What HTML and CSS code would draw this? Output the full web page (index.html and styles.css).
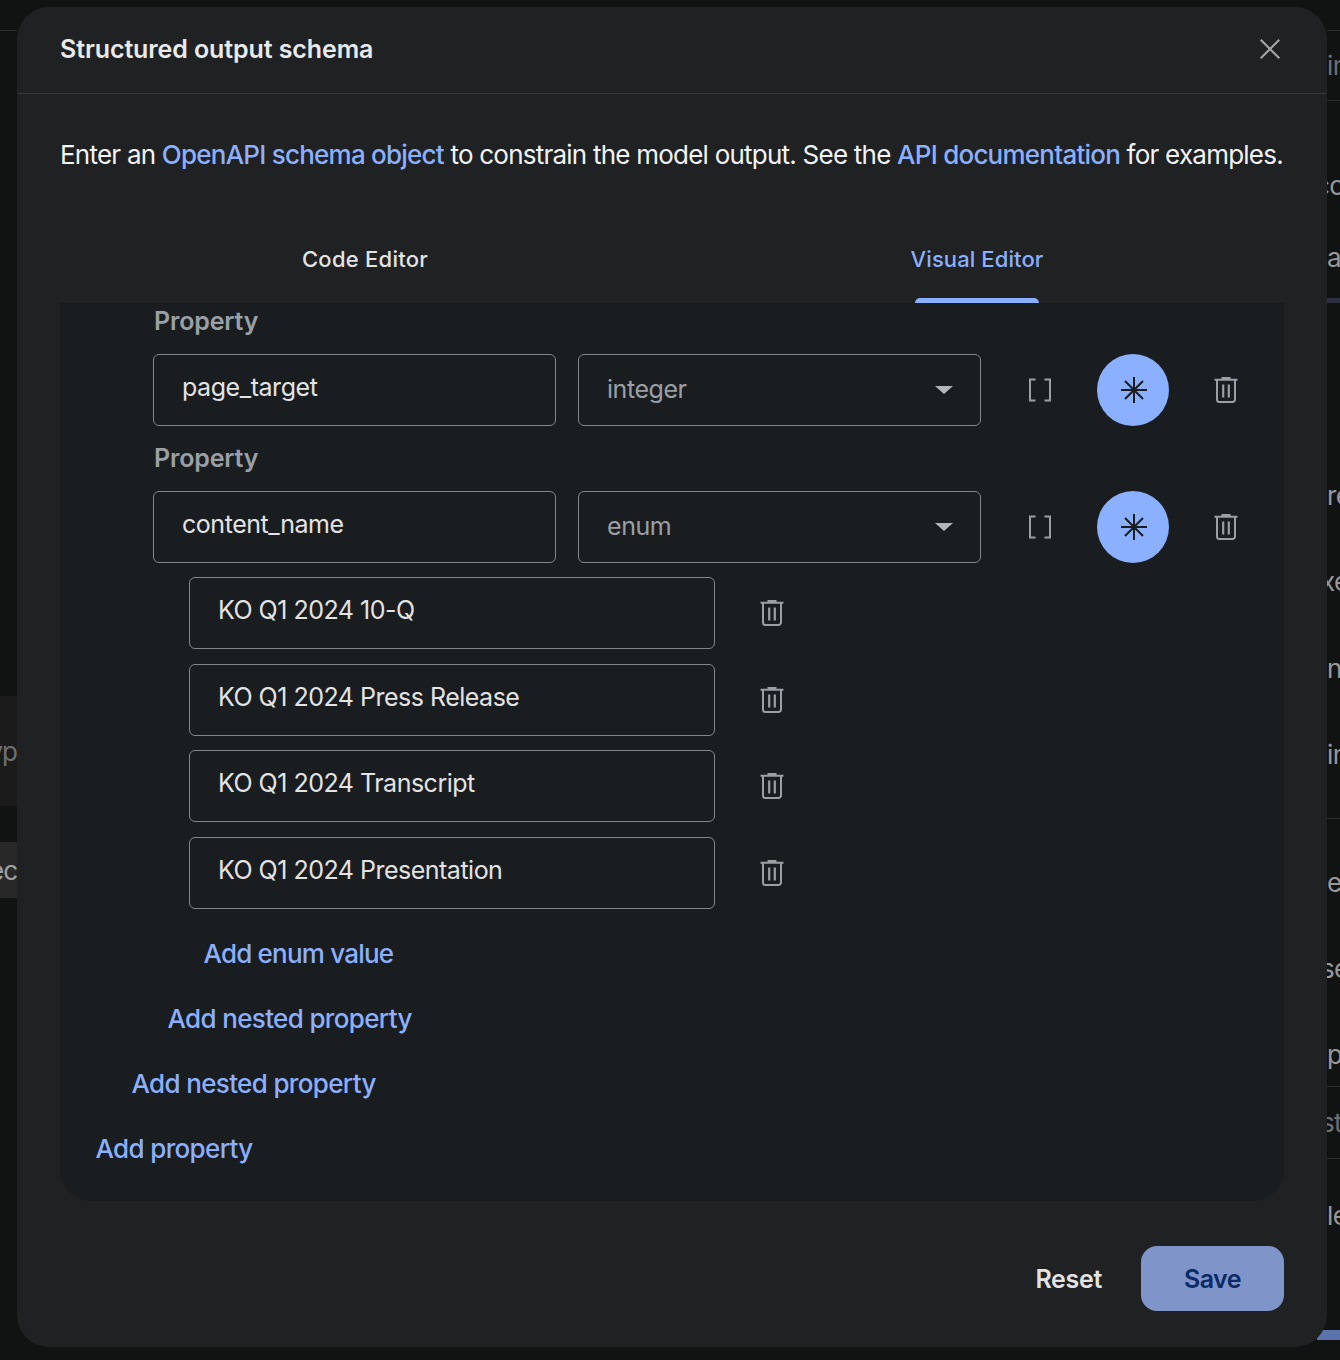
FILE: index.html
```html
<!DOCTYPE html>
<html lang="en">
<head>
    <meta charset="UTF-8">
    <title>Structured output schema</title>
    <link rel="stylesheet" href="styles.css">
</head>
<body>

<svg class="icon-defs" width="0" height="0">
    <symbol id="trash" viewBox="0 0 24 26">
        <path d="M8.5 2.2V1h7v1.2M.5 2.7h23" fill="none" stroke="currentColor" stroke-width="2"/>
        <path d="M3 3v19.5a2.5 2.5 0 0 0 2.5 2.5h13a2.5 2.5 0 0 0 2.5-2.5V3" fill="none" stroke="currentColor" stroke-width="2"/>
        <path d="M9.2 7.5v13M14.8 7.5v13" fill="none" stroke="currentColor" stroke-width="2.2"/>
    </symbol>
    <symbol id="brackets" viewBox="0 0 24 24">
        <path d="M7.5 1.5H2v21h5.5M16.5 1.5H22v21h-5.5" fill="none" stroke="currentColor" stroke-width="2"/>
    </symbol>
    <symbol id="asterisk" viewBox="0 0 26 26">
        <path d="M13 0v26M0 13h26M4 4l18 18M22 4L4 22" fill="none" stroke="currentColor" stroke-width="2"/>
    </symbol>
</svg>

<!-- Page behind the dialog, only the edges show -->
<div class="backdrop">
    <div class="peek-left">
        <div class="peek-line"></div>
        <div class="peek-type">yp</div>
        <div class="peek-sec">ec</div>
    </div>
    <div class="peek-right">
        <div></div>
        <div class="peek-row lined dim">in</div>
        <div></div>
        <div class="peek-row"><span class="cut-wide">co</span></div>
        <div class="peek-row">a</div>
        <div></div>
        <div class="peek-bar"></div>
        <div></div>
        <div class="peek-row">re</div>
        <div class="peek-row"><span class="cut">xe</span></div>
        <div class="peek-row">n</div>
        <div class="peek-row">in</div>
        <div class="lined-bottom"></div>
        <div></div>
        <div class="peek-row">e</div>
        <div class="peek-row"><span class="cut">se</span></div>
        <div class="peek-row lined-bottom low">p</div>
        <div class="peek-row lined-bottom dim"><span class="cut">st</span></div>
        <div class="peek-row">le</div>
        <div></div>
        <div class="peek-save"></div>
    </div>
</div>

<div class="modal">
    <header class="modal-header">
        <h2>Structured output schema</h2>
        <svg class="close-icon" viewBox="0 0 20 20"><path d="M.7.7l18.6 18.6M19.3.7L.7 19.3"/></svg>
    </header>

    <p class="intro">Enter an <a>OpenAPI schema object</a> to constrain the model output. See the <a>API documentation</a> for examples.</p>

    <div class="tabs">
        <div class="tab">Code Editor</div>
        <div class="tab active">Visual Editor</div>
    </div>

    <div class="panel">
        <div class="nest">
            <div class="nest">
                <div class="nest">
                    <div class="prop-label">Property</div>
                    <div class="prop-row">
                        <div class="field name-field">page_target</div>
                        <div class="field type-field">integer<span class="caret"></span></div>
                        <svg class="brackets"><use href="#brackets"/></svg>
                        <div class="required"><svg><use href="#asterisk"/></svg></div>
                        <svg class="trash"><use href="#trash"/></svg>
                    </div>

                    <div class="prop-label">Property</div>
                    <div class="prop-row">
                        <div class="field name-field">content_name</div>
                        <div class="field type-field">enum<span class="caret"></span></div>
                        <svg class="brackets"><use href="#brackets"/></svg>
                        <div class="required"><svg><use href="#asterisk"/></svg></div>
                        <svg class="trash"><use href="#trash"/></svg>
                    </div>

                    <div class="enum-list">
                        <div class="enum-row">
                            <div class="field enum-field">KO Q1 2024 10-Q</div>
                            <svg class="trash"><use href="#trash"/></svg>
                        </div>
                        <div class="enum-row">
                            <div class="field enum-field">KO Q1 2024 Press Release</div>
                            <svg class="trash"><use href="#trash"/></svg>
                        </div>
                        <div class="enum-row">
                            <div class="field enum-field">KO Q1 2024 Transcript</div>
                            <svg class="trash"><use href="#trash"/></svg>
                        </div>
                        <div class="enum-row">
                            <div class="field enum-field">KO Q1 2024 Presentation</div>
                            <svg class="trash"><use href="#trash"/></svg>
                        </div>
                        <a class="add-link first">Add enum value</a>
                    </div>
                    <a class="add-link">Add nested property</a>
                </div>
                <a class="add-link">Add nested property</a>
            </div>
            <a class="add-link">Add property</a>
        </div>
    </div>

    <footer class="modal-footer">
        <button class="reset-btn">Reset</button>
        <button class="save-btn">Save</button>
    </footer>
</div>

</body>
</html>
```

FILE: styles.css
```css
/* General */
body {
    margin: 0;
    height: 1360px;
    overflow: hidden;
    background-color: #111212;
    font-family: Inter, "Noto Sans", sans-serif;
    color: #e3e3e3;
}

.icon-defs {
    display: none;
}

/* Page behind the dialog */
.backdrop {
    display: flex;
    justify-content: space-between;
    height: 1360px;
}

.peek-left {
    width: 17px;
    overflow: hidden;
    font-size: 26px;
    letter-spacing: -1px;
    color: #6f7072;
}

.peek-line {
    height: 30px;
    border-bottom: 1px solid #2b2c2d;
}

.peek-type,
.peek-sec {
    display: flex;
    justify-content: flex-end;
    align-items: center;
}

.peek-type {
    height: 110px;
    margin-top: 665px;
    background-color: #1b1b1b;
}

.peek-sec {
    height: 56px;
    margin-top: 36px;
    background-color: #282828;
    color: #a0a1a3;
}

.peek-right {
    width: 13px;
    padding-left: 10px;
    overflow: hidden;
    display: grid;
    grid-template-rows: 30px 71px 48px 72px 72px 5px 5px 149px 86px 87px 86px 86px 22px 20px 86px 86px 76px 72px 112px 59px 10px 20px;
    font-size: 26px;
    letter-spacing: -0.6px;
    color: #98999b;
    white-space: nowrap;
}

.peek-row {
    display: flex;
    align-items: center;
}

.cut {
    margin-left: -6px;
}

.cut-wide {
    margin-left: -12px;
}

.dim {
    color: #6f7072;
}

.low {
    padding-top: 12px;
}

.lined {
    border-top: 1px solid #2b2c2d;
    border-bottom: 1px solid #2b2c2d;
}

.lined-bottom {
    border-bottom: 1px solid #2b2c2d;
}

.peek-bar {
    background-color: #2a3040;
}

.peek-save {
    margin-left: -10px;
    background-color: #5c74ad;
}

/* Dialog */
.modal {
    position: absolute;
    top: 7px;
    left: 17px;
    width: 1310px;
    height: 1340px;
    box-sizing: border-box;
    background-color: #1f2123;
    border-radius: 32px;
    display: flex;
    flex-direction: column;
}

.modal-header {
    display: flex;
    justify-content: space-between;
    align-items: center;
    height: 87px;
    box-sizing: border-box;
    padding: 0 47px 3px 43px;
    border-bottom: 1px solid #37393b;
}

.modal-header h2 {
    margin: 0;
    font-size: 25px;
    font-weight: 600;
    letter-spacing: -0.1px;
    color: #e8eaed;
}

.close-icon {
    width: 20px;
    height: 20px;
    fill: none;
    stroke: #a4a6a9;
    stroke-width: 2;
}

.intro {
    margin: 43px 43px 0;
    font-size: 26px;
    line-height: 36px;
    letter-spacing: -0.77px;
    color: #f1f3f4;
    white-space: nowrap;
}

.intro a {
    color: #8ab0ff;
    font-weight: 500;
}

/* Tabs */
.tabs {
    display: flex;
    height: 78px;
    margin: 52px 43px 0;
}

.tab {
    flex: 1;
    display: flex;
    justify-content: center;
    align-items: center;
    padding: 0 2px 10px 0;
    font-size: 22px;
    font-weight: 500;
    letter-spacing: 0.25px;
    color: #e3e3e3;
    position: relative;
}

.tab.active {
    color: #8ab0ff;
    letter-spacing: 0.1px;
}

.tab.active::after {
    content: "";
    position: absolute;
    left: 243px;
    bottom: 0;
    width: 124px;
    height: 5px;
    border-radius: 5px 5px 0 0;
    background-color: #8ab0ff;
}

/* Schema panel */
.panel {
    flex: none;
    height: 898px;
    margin: 0 43px;
    box-sizing: border-box;
    padding: 0 0 0 21px;
    background-color: #1a1d20;
    border-radius: 0 0 32px 32px;
    overflow: hidden;
}

.nest {
    padding-left: 36px;
}

.panel > .nest {
    padding-left: 0;
    margin-top: -14px;
}

.prop-label {
    height: 65px;
    display: flex;
    align-items: center;
    padding: 0 0 2px 1px;
    box-sizing: border-box;
    font-size: 25px;
    font-weight: 600;
    letter-spacing: -0.15px;
    color: #9aa0a6;
}

.prop-row {
    display: flex;
    align-items: center;
    height: 72px;
}

.field {
    display: flex;
    align-items: center;
    height: 72px;
    box-sizing: border-box;
    border: 1px solid #80868b;
    border-radius: 6px;
    font-size: 25px;
    letter-spacing: -0.45px;
    color: #e3e3e3;
    padding-bottom: 6px;
}

.name-field {
    width: 403px;
    padding-left: 28px;
}

.type-field {
    width: 403px;
    margin-left: 22px;
    padding: 0 27px 3px 28px;
    justify-content: space-between;
    color: #9aa0a6;
}

.caret {
    width: 0;
    height: 0;
    margin-top: 3px;
    border-left: 9px solid transparent;
    border-right: 9px solid transparent;
    border-top: 8px solid #b4b7ba;
}

.brackets {
    width: 24px;
    height: 24px;
    margin-left: 47px;
    color: #9aa0a6;
}

.required {
    display: flex;
    justify-content: center;
    align-items: center;
    width: 72px;
    height: 72px;
    margin-left: 45px;
    border-radius: 50%;
    background-color: #8ab0ff;
    color: #1a1d20;
}

.required svg {
    width: 26px;
    height: 26px;
    margin-left: 2px;
}

.trash {
    width: 24px;
    height: 26px;
    color: #9aa0a6;
}

.prop-row .trash {
    margin-left: 45px;
}

/* Enum values */
.enum-list {
    display: flex;
    flex-direction: column;
    gap: 14.5px;
    padding: 14px 0 0 36px;
}

.enum-row {
    display: flex;
    align-items: center;
}

.enum-field {
    width: 526px;
    padding-left: 28px;
    letter-spacing: -0.5px;
}

.enum-row .trash {
    margin-left: 45px;
}

.add-link {
    display: block;
    height: 65px;
    line-height: 65px;
    padding-left: 15px;
    margin-left: -0.5px;
    font-size: 26px;
    font-weight: 500;
    letter-spacing: -0.65px;
    color: #8ab0ff;
}

.add-link.first {
    margin-top: -2px;
    letter-spacing: -0.8px;
}

/* Footer */
.modal-footer {
    display: flex;
    justify-content: flex-end;
    align-items: center;
    gap: 39px;
    margin: 45px 43px 0;
}

.reset-btn,
.save-btn {
    border: none;
    font-family: inherit;
    font-size: 25px;
    font-weight: 600;
    letter-spacing: -0.3px;
}

.reset-btn {
    background: none;
    color: #e3e3e3;
    padding: 0;
}

.save-btn {
    width: 143px;
    height: 65px;
    border-radius: 16px;
    background-color: #7f95c9;
    color: #0b2a66;
    letter-spacing: -0.5px;
}
```
